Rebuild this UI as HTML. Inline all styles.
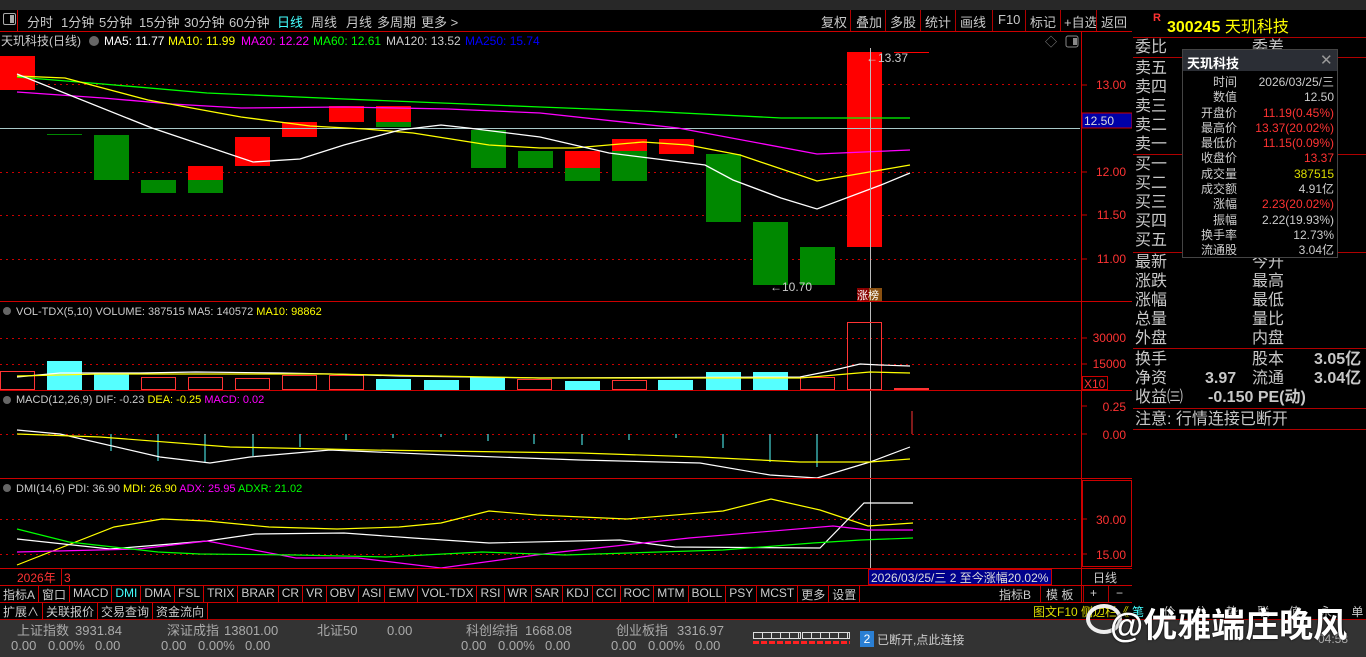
<!DOCTYPE html>
<html><head><meta charset="utf-8">
<style>
*{margin:0;padding:0;box-sizing:border-box}
body{width:1366px;height:657px;background:#000;overflow:hidden;position:relative;font-family:"Liberation Sans","Noto Sans CJK SC",sans-serif;color:#c8c8c8}
.a{position:absolute;white-space:nowrap}
.tb{font-size:13px;top:12px;color:#c8c8c8}
.rp{font-size:16px;color:#c8c8c8;line-height:19px}
.hl{position:absolute;height:1px;background:#b00000}
.vl{position:absolute;width:1px;background:#b00000}
.pp{font-size:12px;line-height:15.3px}
</style></head><body>
<div class="a" style="left:0;top:0;width:1366px;height:10px;background:#282828"></div>
<!-- toolbar -->
<div class="a" style="left:3px;top:13px;width:13px;height:12px;border:1px solid #aaa;border-radius:2px"></div>
<div class="a" style="left:10px;top:15px;width:4px;height:8px;background:#aaa"></div>
<div class="vl" style="left:17px;top:10px;height:21px;background:#c00"></div>
<div class="a tb" style="left:27px">分时</div>
<div class="a tb" style="left:61px">1分钟</div>
<div class="a tb" style="left:99px">5分钟</div>
<div class="a tb" style="left:139px">15分钟</div>
<div class="a tb" style="left:184px">30分钟</div>
<div class="a tb" style="left:229px">60分钟</div>
<div class="a tb" style="left:277px;color:#4ff">日线</div>
<div class="a tb" style="left:311px">周线</div>
<div class="a tb" style="left:346px">月线</div>
<div class="a tb" style="left:377px">多周期</div>
<div class="a tb" style="left:421px">更多 &gt;</div>
<div class="a tb" style="left:821px">复权</div><div class="vl" style="left:850px;top:10px;height:22px"></div>
<div class="a tb" style="left:856px">叠加</div><div class="vl" style="left:885px;top:10px;height:22px"></div>
<div class="a tb" style="left:890px">多股</div><div class="vl" style="left:920px;top:10px;height:22px"></div>
<div class="a tb" style="left:925px">统计</div><div class="vl" style="left:955px;top:10px;height:22px"></div>
<div class="a tb" style="left:960px">画线</div><div class="vl" style="left:992px;top:10px;height:22px"></div>
<div class="a tb" style="left:998px">F10</div><div class="vl" style="left:1025px;top:10px;height:22px"></div>
<div class="a tb" style="left:1030px">标记</div><div class="vl" style="left:1060px;top:10px;height:22px"></div>
<div class="a tb" style="left:1064px">+自选</div><div class="vl" style="left:1096px;top:10px;height:22px"></div>
<div class="a tb" style="left:1101px">返回</div>
<div class="hl" style="left:0;top:31px;width:1132px;background:#c00"></div>

<svg class="a" style="left:0;top:0" width="1132" height="620" xmlns="http://www.w3.org/2000/svg" font-family="Liberation Sans, Noto Sans CJK SC, sans-serif">
<g stroke="#c00" stroke-dasharray="2,4" stroke-width="1">
<line x1="0" y1="84.5" x2="1080" y2="84.5"/><line x1="0" y1="172.5" x2="1080" y2="172.5"/><line x1="0" y1="215.5" x2="1080" y2="215.5"/><line x1="0" y1="259.5" x2="1080" y2="259.5"/>
<line x1="0" y1="338.5" x2="1080" y2="338.5"/><line x1="0" y1="364.5" x2="1080" y2="364.5"/>
<line x1="0" y1="434.5" x2="1080" y2="434.5"/>
<line x1="0" y1="519.5" x2="1080" y2="519.5"/><line x1="0" y1="554.5" x2="1080" y2="554.5"/>
</g>
<g>
<rect x="0" y="56" width="35" height="34" fill="#f00"/>
<rect x="47" y="134" width="35" height="1" fill="#080"/>
<rect x="94" y="135" width="35" height="45" fill="#080"/>
<rect x="141" y="180" width="35" height="13" fill="#080"/>
<rect x="188" y="166" width="35" height="14" fill="#f00"/><rect x="188" y="180" width="35" height="13" fill="#080"/>
<rect x="235" y="137" width="35" height="29" fill="#f00"/>
<rect x="282" y="122" width="35" height="15" fill="#f00"/>
<rect x="329" y="106" width="35" height="16" fill="#f00"/>
<rect x="376" y="106" width="35" height="16" fill="#f00"/><rect x="376" y="122" width="35" height="5" fill="#080"/>
<rect x="471" y="130" width="35" height="38" fill="#080"/>
<rect x="518" y="151" width="35" height="17" fill="#080"/>
<rect x="565" y="151" width="35" height="17" fill="#f00"/><rect x="565" y="168" width="35" height="13" fill="#080"/>
<rect x="612" y="139" width="35" height="12" fill="#f00"/><rect x="612" y="151" width="35" height="30" fill="#080"/>
<rect x="659" y="139" width="35" height="15" fill="#f00"/>
<rect x="706" y="154" width="35" height="68" fill="#080"/>
<rect x="753" y="222" width="35" height="63" fill="#080"/>
<rect x="800" y="247" width="35" height="38" fill="#080"/>
<rect x="847" y="52" width="35" height="195" fill="#f00"/>
</g>
<line x1="0" y1="128.5" x2="1080" y2="128.5" stroke="#a8c8c8"/>
<g fill="none" stroke-width="1.3">
<polyline stroke="#0f0" points="17,77 103,84 207,93 344,99 540,107 643,111 781,118 850,118 910,118"/>
<polyline stroke="#f0f" points="17,92 103,98 172,104 241,108 344,107 448,109 540,113 678,128 817,154 910,150"/>
<polyline stroke="#ff0" points="17,76 65,78 148,100 241,117 310,126 365,129 413,133 489,145 540,148 574,148 643,142 688,145 740,155 817,181 910,165"/>
<polyline stroke="#fff" points="17,74 152,128 253,162 300,159 344,145 400,130 441,125 468,128 540,137 609,153 705,165 733,180 781,198 817,209 881,185 910,173"/>
</g>
<line x1="870.5" y1="48" x2="870.5" y2="568" stroke="#bbb"/>
<line x1="894" y1="52.5" x2="929" y2="52.5" stroke="#f00"/>
<text x="866" y="62" font-size="12" fill="#ccc">←13.37</text>
<text x="770" y="291" font-size="12" fill="#ccc">←10.70</text>
<rect x="857" y="288" width="12" height="13" fill="#800"/><rect x="869" y="288" width="13" height="13" fill="#8a5010"/>
<text x="857" y="299" font-size="11" fill="#fff">涨榜</text>
<text x="1045" y="46" font-size="12" fill="#888">◇</text>
<rect x="1066" y="36" width="12" height="11" fill="none" stroke="#888" rx="2"/><rect x="1073" y="38" width="4" height="7" fill="#888"/>
<text x="1" y="45" font-size="12" fill="#ccc">天玑科技(日线)</text>
<circle cx="94" cy="41" r="5" fill="#666"/>
<text x="104" y="45" font-size="12" fill="#fff">MA5: 11.77</text>
<text x="168" y="45" font-size="12" fill="#ff0">MA10: 11.99</text>
<text x="241" y="45" font-size="12" fill="#f0f">MA20: 12.22</text>
<text x="313" y="45" font-size="12" fill="#0f0">MA60: 12.61</text>
<text x="386" y="45" font-size="12" fill="#ccc">MA120: 13.52</text>
<text x="465" y="45" font-size="12" fill="#00f">MA250: 15.74</text>
<line x1="0" y1="301.5" x2="1132" y2="301.5" stroke="#c00"/>
<circle cx="7" cy="311" r="4" fill="#666"/>
<text x="16" y="315" font-size="11" fill="#ccc">VOL-TDX(5,10) VOLUME: 387515 MA5: 140572 <tspan fill="#ff0">MA10: 98862</tspan></text>
<g stroke="#f33" fill="none">
<rect x="0.5" y="371.5" width="34" height="18"/>
<rect x="141.5" y="377.5" width="34" height="12"/><rect x="188.5" y="377.5" width="34" height="12"/><rect x="235.5" y="378.5" width="34" height="11"/>
<rect x="282.5" y="375.5" width="34" height="14"/><rect x="329.5" y="375.5" width="34" height="14"/>
<rect x="517.5" y="379.5" width="34" height="10"/><rect x="612.5" y="380.5" width="34" height="9"/>
<rect x="800.5" y="377.5" width="34" height="12"/><rect x="847.5" y="322.5" width="34" height="67"/>
</g>
<rect x="894" y="388" width="35" height="2" fill="#f33"/>
<g fill="#5ff">
<rect x="47" y="361" width="35" height="29"/><rect x="94" y="374" width="35" height="16"/>
<rect x="376" y="379" width="35" height="11"/><rect x="424" y="380" width="35" height="10"/><rect x="470" y="377" width="35" height="13"/>
<rect x="565" y="381" width="35" height="9"/><rect x="658" y="380" width="35" height="10"/>
<rect x="706" y="372" width="35" height="18"/><rect x="753" y="372" width="35" height="18"/>
</g>
<polyline fill="none" stroke="#fff" stroke-width="1.2" points="17,377 60,373 140,373 196,372 280,373 330,374 400,376 540,378 800,377 830,371 860,364 880,365 910,366"/>
<polyline fill="none" stroke="#ff0" stroke-width="1.2" points="17,376 100,374 330,374 540,378 800,378 870,372 910,373"/>
<line x1="0" y1="390.5" x2="1132" y2="390.5" stroke="#c00"/>
<circle cx="7" cy="400" r="4" fill="#666"/>
<text x="16" y="403" font-size="11" fill="#ccc">MACD(12,26,9) DIF: -0.23 <tspan fill="#ff0">DEA: -0.25</tspan> <tspan fill="#f0f">MACD: 0.02</tspan></text>
<g stroke="#5ff">
<line x1="111" y1="434" x2="111" y2="451"/><line x1="158" y1="434" x2="158" y2="461"/><line x1="205" y1="434" x2="205" y2="462"/><line x1="253" y1="434" x2="253" y2="456"/>
<line x1="300" y1="434" x2="300" y2="447"/><line x1="346" y1="434" x2="346" y2="440"/><line x1="393" y1="434" x2="393" y2="438"/><line x1="441" y1="434" x2="441" y2="437"/>
<line x1="488" y1="434" x2="488" y2="441"/><line x1="534" y1="434" x2="534" y2="444"/><line x1="582" y1="434" x2="582" y2="445"/><line x1="629" y1="434" x2="629" y2="440"/>
<line x1="676" y1="434" x2="676" y2="438"/><line x1="723" y1="434" x2="723" y2="448"/><line x1="770" y1="434" x2="770" y2="462"/><line x1="817" y1="434" x2="817" y2="467"/>
</g>
<line x1="912" y1="434" x2="912" y2="411" stroke="#f33"/>
<polyline fill="none" stroke="#fff" stroke-width="1.2" points="17,430 60,434 160,457 210,463 250,457 330,450 470,456 580,460 700,463 770,475 817,478 870,462 910,447"/>
<polyline fill="none" stroke="#ff0" stroke-width="1.2" points="17,434 100,437 230,447 370,450 580,453 700,457 800,462 870,462 910,459"/>
<line x1="0" y1="478.5" x2="1132" y2="478.5" stroke="#c00"/>
<circle cx="7" cy="488" r="4" fill="#666"/>
<text x="16" y="492" font-size="11" fill="#ccc">DMI(14,6) PDI: 36.90 <tspan fill="#ff0">MDI: 26.90</tspan> <tspan fill="#f0f">ADX: 25.95</tspan> <tspan fill="#0f0">ADXR: 21.02</tspan></text>
<g fill="none" stroke-width="1.2">
<polyline stroke="#ff0" points="17,565 114,527 162,519 207,521 269,527 337,529 399,527 441,523 489,511 537,515 627,519 723,511 771,499 820,510 868,526 913,523"/>
<polyline stroke="#fff" points="17,539 110,549 207,541 255,534 344,533 413,538 489,543 620,540 675,547 820,548 864,503 913,503"/>
<polyline stroke="#f0f" points="17,552 138,549 207,541 296,558 358,558 441,568 551,553 689,538 833,526 868,530 913,530"/>
<polyline stroke="#0f0" points="17,529 69,542 158,552 200,554 296,555 386,557 482,552 565,555 723,550 813,543 861,540 913,538"/>
</g>
<line x1="0" y1="568.5" x2="1132" y2="568.5" stroke="#c00"/>
<line x1="1081.5" y1="32" x2="1081.5" y2="602" stroke="#c00"/>
<line x1="1132.5" y1="10" x2="1132.5" y2="620" stroke="#c00"/>
<g font-size="12" fill="#f33" text-anchor="end">
<text x="1126" y="89">13.00</text><text x="1126" y="176">12.00</text><text x="1126" y="219">11.50</text><text x="1126" y="263">11.00</text>
<text x="1126" y="342">30000</text><text x="1126" y="368">15000</text>
<text x="1126" y="411">0.25</text><text x="1126" y="439">0.00</text>
<text x="1126" y="524">30.00</text><text x="1126" y="559">15.00</text>
</g>
<g stroke="#c00"><line x1="1082" y1="85" x2="1087" y2="85"/><line x1="1082" y1="172" x2="1087" y2="172"/><line x1="1082" y1="215" x2="1087" y2="215"/><line x1="1082" y1="259" x2="1087" y2="259"/><line x1="1082" y1="338" x2="1087" y2="338"/><line x1="1082" y1="364" x2="1087" y2="364"/><line x1="1082" y1="406" x2="1087" y2="406"/><line x1="1082" y1="434" x2="1087" y2="434"/><line x1="1082" y1="519" x2="1087" y2="519"/><line x1="1082" y1="554" x2="1087" y2="554"/></g>
<rect x="1082" y="113" width="50" height="15" fill="#0000a8" stroke="#c00"/>
<text x="1084" y="125" font-size="12" fill="#ddd">12.50</text>
<rect x="1082.5" y="376.5" width="25" height="13" fill="none" stroke="#c00"/>
<text x="1084" y="388" font-size="12" fill="#f33">X10</text>
<rect x="1082.5" y="480.5" width="49" height="86" fill="none" stroke="#c00"/>
<line x1="0" y1="585.5" x2="1132" y2="585.5" stroke="#c00"/>
<line x1="61.5" y1="569" x2="61.5" y2="585" stroke="#c00"/>
<text x="17" y="582" font-size="12" fill="#f33">2026年</text>
<text x="64" y="582" font-size="12" fill="#f33">3</text>
<rect x="868.5" y="569.5" width="183" height="15" fill="#00008b" stroke="#c00"/>
<text x="871" y="582" font-size="12" fill="#ddd">2026/03/25/三 2 至今涨幅20.02%</text>
<text x="1093" y="582" font-size="12" fill="#ccc">日线</text>
<line x1="0" y1="602.5" x2="1132" y2="602.5" stroke="#c00"/>
</svg>

<div class="a" style="left:0;top:586px;height:16px;font-size:12px;color:#ccc;display:flex">
<span style="padding:0 3px;border-right:1px solid #c00">指标A</span><span style="padding:0 3px;border-right:1px solid #c00">窗口</span><span style="padding:0 3px;border-right:1px solid #c00">MACD</span><span style="padding:0 3px;border-right:1px solid #c00;color:#4ff">DMI</span><span style="padding:0 3px;border-right:1px solid #c00">DMA</span><span style="padding:0 3px;border-right:1px solid #c00">FSL</span><span style="padding:0 3px;border-right:1px solid #c00">TRIX</span><span style="padding:0 3px;border-right:1px solid #c00">BRAR</span><span style="padding:0 3px;border-right:1px solid #c00">CR</span><span style="padding:0 3px;border-right:1px solid #c00">VR</span><span style="padding:0 3px;border-right:1px solid #c00">OBV</span><span style="padding:0 3px;border-right:1px solid #c00">ASI</span><span style="padding:0 3px;border-right:1px solid #c00">EMV</span><span style="padding:0 3px;border-right:1px solid #c00">VOL-TDX</span><span style="padding:0 3px;border-right:1px solid #c00">RSI</span><span style="padding:0 3px;border-right:1px solid #c00">WR</span><span style="padding:0 3px;border-right:1px solid #c00">SAR</span><span style="padding:0 3px;border-right:1px solid #c00">KDJ</span><span style="padding:0 3px;border-right:1px solid #c00">CCI</span><span style="padding:0 3px;border-right:1px solid #c00">ROC</span><span style="padding:0 3px;border-right:1px solid #c00">MTM</span><span style="padding:0 3px;border-right:1px solid #c00">BOLL</span><span style="padding:0 3px;border-right:1px solid #c00">PSY</span><span style="padding:0 3px;border-right:1px solid #c00">MCST</span><span style="padding:0 3px;border-right:1px solid #c00">更多</span><span style="padding:0 3px;border-right:1px solid #c00">设置</span>
</div>
<div class="a" style="left:999px;top:586px;font-size:12px;color:#ccc">指标B</div>
<div class="a" style="left:1046px;top:586px;font-size:12px;color:#ccc">模 板</div>
<div class="a" style="left:1090px;top:586px;font-size:12px;color:#ccc">+</div>
<div class="a" style="left:1116px;top:586px;font-size:12px;color:#ccc">−</div>
<div class="vl" style="left:1040px;top:586px;height:16px"></div><div class="vl" style="left:1083px;top:586px;height:16px"></div><div class="vl" style="left:1108px;top:586px;height:16px"></div>
<div class="a" style="left:0;top:603px;height:17px;font-size:12px;color:#ccc;display:flex">
<span style="padding:0 3px;border-right:1px solid #c00">扩展∧</span><span style="padding:0 3px;border-right:1px solid #c00">关联报价</span><span style="padding:0 3px;border-right:1px solid #c00">交易查询</span><span style="padding:0 3px;border-right:1px solid #c00">资金流向</span>
</div>
<div class="a" style="left:1033px;top:603px;font-size:12px;color:#dd0">图文F10 侧边栏《</div>
<div class="a" style="left:1132px;top:603px;width:234px;height:17px;font-size:12px;color:#ccc;letter-spacing:8px"><span style="color:#4ff">笔</span> 价 分 势 联 值 永 单 筹</div>
<div class="hl" style="left:0;top:619px;width:1366px"></div>

<div class="a" style="left:0;top:620px;width:1366px;height:37px;background:#333"></div>
<div class="a" style="left:0;top:623px;font-size:13px;color:#aaa;line-height:15px">
<span class="a" style="left:17px">上证指数</span><span class="a" style="left:75px">3931.84</span>
<span class="a" style="left:167px">深证成指</span><span class="a" style="left:224px">13801.00</span>
<span class="a" style="left:317px">北证50</span><span class="a" style="left:387px">0.00</span>
<span class="a" style="left:466px">科创综指</span><span class="a" style="left:525px">1668.08</span>
<span class="a" style="left:616px">创业板指</span><span class="a" style="left:677px">3316.97</span>
</div>
<div class="a" style="left:0;top:638px;font-size:13px;color:#aaa;line-height:15px">
<span class="a" style="left:11px">0.00</span><span class="a" style="left:48px">0.00%</span><span class="a" style="left:95px">0.00</span>
<span class="a" style="left:161px">0.00</span><span class="a" style="left:198px">0.00%</span><span class="a" style="left:245px">0.00</span>
<span class="a" style="left:461px">0.00</span><span class="a" style="left:498px">0.00%</span><span class="a" style="left:545px">0.00</span>
<span class="a" style="left:611px">0.00</span><span class="a" style="left:648px">0.00%</span><span class="a" style="left:695px">0.00</span>
</div>
<div class="a" style="left:753px;top:632px;width:48px;height:7px;border:1px solid #ddd;background:repeating-linear-gradient(90deg,transparent 0 8px,#ddd 8px 9px)"></div>
<div class="a" style="left:802px;top:632px;width:48px;height:7px;border:1px solid #ddd;background:repeating-linear-gradient(90deg,transparent 0 8px,#ddd 8px 9px)"></div>
<div class="a" style="left:753px;top:641px;width:97px;height:3px;background:repeating-linear-gradient(90deg,#f22 0 6px,transparent 6px 8px)"></div>
<div class="a" style="left:860px;top:631px;width:14px;height:16px;background:#2a7fd4;color:#fff;font-size:12px;text-align:center;line-height:16px">2</div>
<div class="a" style="left:877px;top:631px;font-size:12px;color:#ccc">已断开,点此连接</div>
<div class="a" style="left:1318px;top:632px;font-size:12px;color:#aaa">04:58</div>
<div class="a" style="left:1086px;top:604px;width:36px;height:30px;border-radius:50%;border:4px solid #eee"></div>
<div class="a" style="left:1110px;top:598px;font-size:34px;color:#fff;font-weight:bold;text-shadow:0 0 2px #000">@优雅端庄晚风</div>

<div class="a" style="left:1153px;top:12px;font-size:11px;color:#f33;font-weight:bold">R</div>
<div class="a" style="left:1167px;top:13px;font-size:16px;color:#ff0"><b>300245</b> 天玑科技</div>
<div class="hl" style="left:1133px;top:37px;width:233px"></div>
<div class="a rp" style="left:1135px;top:38px">委比</div><div class="a rp" style="left:1252px;top:38px">委差</div>
<div class="hl" style="left:1133px;top:57px;width:233px"></div>
<div class="a rp" style="left:1135px;top:59px">卖五<br>卖四<br>卖三<br>卖二<br>卖一</div>
<div class="hl" style="left:1133px;top:154px;width:233px"></div>
<div class="a rp" style="left:1135px;top:155px">买一<br>买二<br>买三<br>买四<br>买五</div>
<div class="hl" style="left:1133px;top:252px;width:233px"></div>
<div class="a rp" style="left:1135px;top:253px">最新<br>涨跌<br>涨幅<br>总量<br>外盘</div>
<div class="a rp" style="left:1252px;top:253px">今开<br>最高<br>最低<br>量比<br>内盘</div>
<div class="hl" style="left:1133px;top:348px;width:233px"></div>
<div class="a rp" style="left:1135px;top:350px">换手<br>净资<br>收益㈢</div>
<div class="a rp" style="left:1252px;top:350px">股本<br>流通</div>
<div class="a rp" style="left:1314px;top:350px;font-weight:bold">3.05亿<br>3.04亿</div>
<div class="a rp" style="left:1205px;top:369px;font-weight:bold">3.97</div>
<div class="a rp" style="left:1208px;top:388px;font-weight:bold">-0.150 PE(动)</div>
<div class="hl" style="left:1133px;top:408px;width:233px"></div>
<div class="a rp" style="left:1135px;top:410px">注意: 行情连接已断开</div>
<div class="hl" style="left:1133px;top:429px;width:233px"></div>
<div class="a" style="left:1182px;top:49px;width:156px;height:209px;background:#000;border:1px solid #444"></div>
<div class="a" style="left:1183px;top:50px;width:154px;height:21px;background:#2b2e35"></div>
<div class="a" style="left:1187px;top:53px;font-size:13px;color:#fff;font-weight:bold">天玑科技</div>
<div class="a" style="left:1320px;top:51px;font-size:15px;color:#999">✕</div>
<div class="a pp" style="left:1187px;top:75px;color:#ccc;text-align:right;width:50px">时间<br>数值<br>开盘价<br>最高价<br>最低价<br>收盘价<br>成交量<br>成交额<br>涨幅<br>振幅<br>换手率<br>流通股</div>
<div class="a pp" style="left:1236px;top:75px;width:98px;text-align:right;color:#ccc">2026/03/25/三<br>12.50<br><span style="color:#f33">11.19(0.45%)</span><br><span style="color:#f33">13.37(20.02%)</span><br><span style="color:#f33">11.15(0.09%)</span><br><span style="color:#f33">13.37</span><br><span style="color:#dd0">387515</span><br>4.91亿<br><span style="color:#f33">2.23(20.02%)</span><br>2.22(19.93%)<br>12.73%<br>3.04亿</div>
</body></html>
